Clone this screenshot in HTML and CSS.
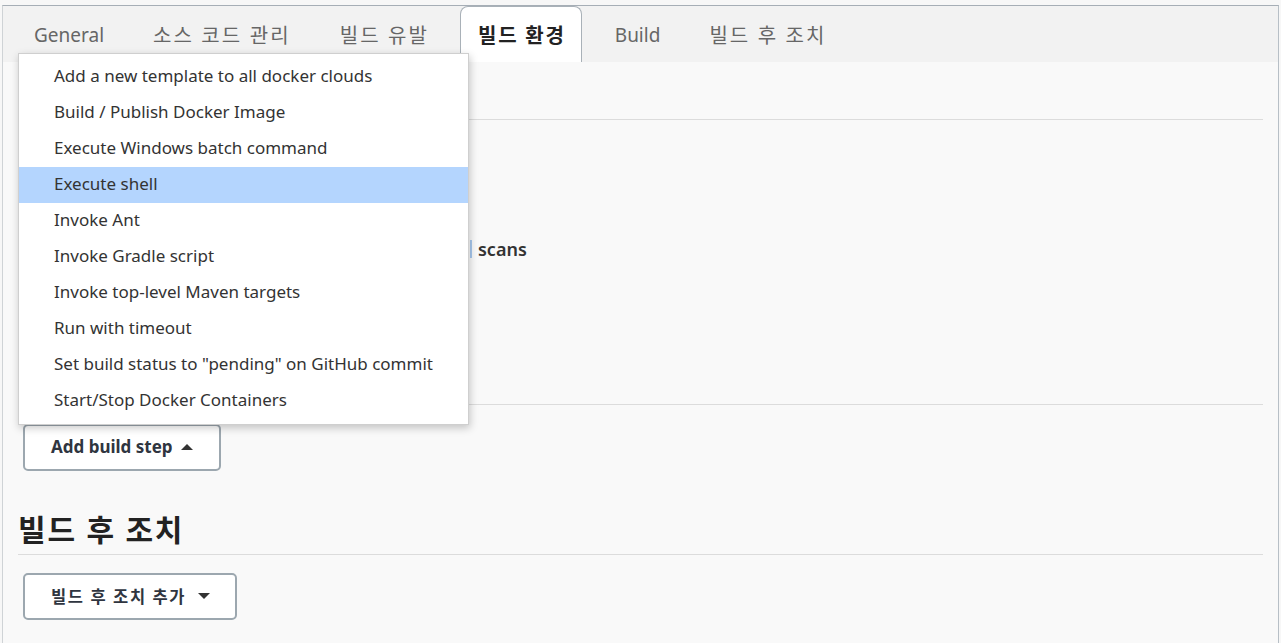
FILE: index.html
```html
<!DOCTYPE html>
<html lang="ko">
<head>
<meta charset="utf-8">
<title>Jenkins config</title>
<link rel="stylesheet" href="styles.css">
</head>
<body>
<div class="frame">
  <nav class="tabbar">
    <div class="tab">General</div>
    <div class="tab ko">소스 코드 관리</div>
    <div class="tab ko">빌드 유발</div>
    <div class="tab ko active">빌드 환경</div>
    <div class="tab">Build</div>
    <div class="tab ko">빌드 후 조치</div>
  </nav>
  <main class="content">
    <div class="sec-top"></div>
    <hr class="rule">
    <div class="sec-body">
      <div class="opt-row">
        <span class="caret"></span><span class="opt-label">scans</span>
      </div>
    </div>
    <hr class="rule">
    <button class="btn btn-step">Add build step <span class="tri up"></span></button>
    <h2 class="heading">빌드 후 조치</h2>
    <hr class="rule">
    <button class="btn btn-post"><span class="ko-label">빌드 후 조치 추가</span> <span class="tri down"></span></button>
  </main>
  <ul class="menu">
    <li>Add a new template to all docker clouds</li>
    <li>Build / Publish Docker Image</li>
    <li>Execute Windows batch command</li>
    <li class="hl">Execute shell</li>
    <li>Invoke Ant</li>
    <li>Invoke Gradle script</li>
    <li>Invoke top-level Maven targets</li>
    <li>Run with timeout</li>
    <li>Set build status to "pending" on GitHub commit</li>
    <li>Start/Stop Docker Containers</li>
  </ul>
</div>
</body>
</html>
```

FILE: styles.css
```css
html, body {
  margin: 0;
  padding: 0;
  background: #f7f7f7;
  font-family: "Noto Sans", "Noto Sans CJK KR", sans-serif;
  color: #333;
}
.frame {
  position: relative;
  margin: 5px 0 0 2px;
  width: 1275px;
  height: 637px;
  border-top: 1px solid #a6aeb6;
  border-left: 1px solid #cfd3d6;
  border-right: 1px solid #b7bfc6;
  background: #f9f9f9;
  overflow: hidden;
}
.tabbar {
  display: flex;
  gap: 15px;
  height: 56px;
  padding-left: 13px;
  background: #f2f2f2;
  align-items: stretch;
}
.tab {
  display: flex;
  align-items: center;
  padding: 0 15px 0 17px;
  font-size: 19px;
  color: #666;
  border: 1px solid transparent;
  border-bottom: none;
  border-radius: 8px 8px 0 0;
}
.tab.ko {
  font-size: 20px;
  letter-spacing: 2.1px;
  padding-right: 15px;
}
.tab.active {
  background: #fff;
  border-color: #a9b1b8;
  color: #222;
  font-weight: 700;
  letter-spacing: 1.8px;
}
.content {
  padding: 0 15px 0 15px;
}
.sec-top {
  height: 57px;
}
.rule {
  margin: 0;
  border: none;
  border-top: 1px solid #dcdcdc;
}
.sec-body {
  height: 284px;
  display: flex;
  flex-direction: column;
  justify-content: center;
}
.opt-row {
  display: flex;
  align-items: center;
  padding-left: 452px;
  font-size: 18px;
  font-weight: 600;
  color: #333;
  margin-top: -27px;
}
.caret {
  display: inline-block;
  width: 2px;
  height: 18px;
  background: #a8c8ee;
  margin-right: 6px;
}
.btn {
  display: flex;
  align-items: center;
  gap: 8px;
  margin-left: 5px;
  background: #fff;
  border: 2px solid #9ca7af;
  border-radius: 5px;
  font-family: inherit;
  font-size: 17px;
  font-weight: 700;
  color: #2f3540;
  height: 47px;
  padding: 0 26px 2px 26px;
}
.btn-step {
  margin-top: 19px;
}
.btn-post {
  margin-top: 18px;
  padding: 0 25px 2px 26px;
  gap: 12px;
}
.ko-label {
  font-size: 16.5px;
  letter-spacing: 1.6px;
}
.tri {
  width: 0;
  height: 0;
  border-left: 6px solid transparent;
  border-right: 6px solid transparent;
}
.tri.up { border-bottom: 6px solid #333; }
.tri.down { border-top: 6px solid #333; }
.heading {
  margin: 39px 0 0 0;
  font-size: 30px;
  font-weight: 700;
  color: #222;
  height: 44px;
  line-height: 40px;
  letter-spacing: 1.8px;
}
.menu {
  position: absolute;
  left: 15px;
  top: 47px;
  width: 449px;
  margin: 0;
  padding: 5px 0;
  list-style: none;
  background: #fff;
  border: 1px solid #cfcfcf;
  box-shadow: 1px 3px 8px rgba(0, 0, 0, 0.22);
}
.menu li {
  height: 36px;
  line-height: 34px;
  padding-left: 35px;
  font-size: 17px;
  color: #333;
  white-space: nowrap;
}
.menu li.hl {
  background: #b4d5fe;
}
```
